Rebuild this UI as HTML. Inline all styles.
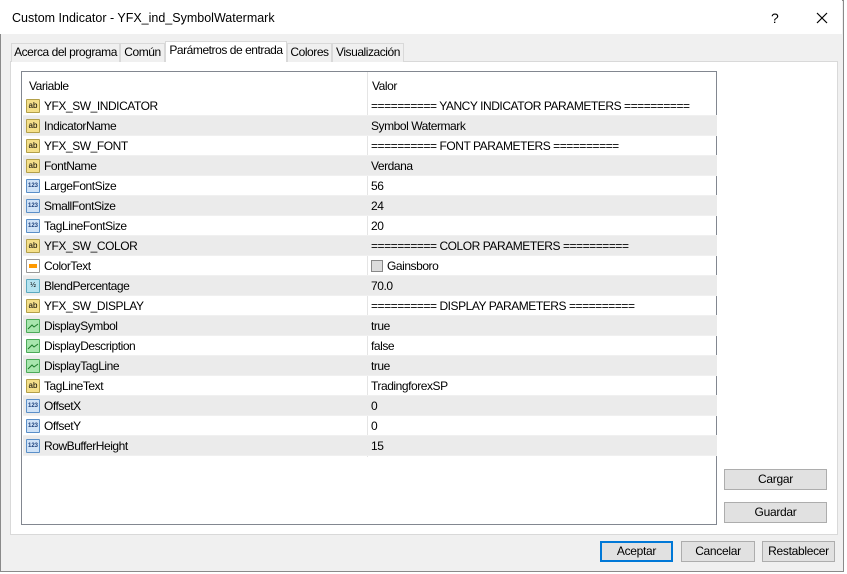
<!DOCTYPE html><html><head><style>
*{margin:0;padding:0;box-sizing:border-box}
body{width:847px;height:574px;background:#fff;font-family:"Liberation Sans",sans-serif;font-size:12px;color:#000;position:relative;overflow:hidden}
.a{position:absolute;white-space:nowrap}
.win{left:0;top:0;width:844px;height:572px;border:1px solid #8a8a8a;background:#f0f0f0}
.title{left:0;top:0;width:842px;height:34px;background:#fff}
.tab{top:43px;height:19px;border:1px solid #d9d9d9;border-bottom:none;background:#f0f0f0;text-align:center;line-height:17px;letter-spacing:-0.45px;overflow:hidden}
.page{left:10px;top:61px;width:828px;height:474px;background:#fff;border:1px solid #d9d9d9}
.list{left:21px;top:71px;width:696px;height:454px;border:1px solid #828790;background:#fff;letter-spacing:-0.45px}
.row{left:1px;width:694px;height:20px;border-bottom:1px solid #f0f0f0}
.row span{position:absolute;top:3px}
.g{background:#ebebeb}
.ic{position:absolute;left:3px;top:3px;width:14px;height:14px;border:1px solid #b3a04a;background:#f5e08a;font-size:8px;line-height:12px;text-align:center;border-radius:1px;letter-spacing:0}
.n{border-color:#5a8fc8;background:#cfe2f7;color:#1a3e7a;font-size:6px;font-weight:bold}
.h{border-color:#5aa9c0;background:#b5e3f0;font-size:7px}
.b{border-color:#4caa5a;background:#a8e6ae}
.c{border-color:#999;background:#fff}
.btn{height:21px;border:1px solid #adadad;background:#e1e1e1;text-align:center;line-height:19px;letter-spacing:-0.3px}
</style></head><body>
<div class="a win"></div>
<div class="a title"></div>
<div class="a" style="left:12px;top:11px;font-size:12.5px">Custom Indicator - YFX_ind_SymbolWatermark</div>
<div class="a" style="left:771px;top:10px;font-size:14px">?</div>
<svg class="a" style="left:816px;top:12px" width="12" height="12"><path d="M1 1L11 11M11 1L1 11" stroke="#000" stroke-width="1.2"/></svg>
<div class="a page"></div>
<div class="a tab" style="left:11px;width:109px">Acerca del programa</div>
<div class="a tab" style="left:120px;width:45px">Común</div>
<div class="a tab" style="left:287px;width:45px">Colores</div>
<div class="a tab" style="left:332px;width:72px">Visualización</div>
<div class="a tab" style="left:165px;top:41px;height:21px;width:122px;background:#fff;line-height:16px;z-index:2">Parámetros de entrada</div>
<div class="a list">
<div class="a" style="left:7px;top:7px">Variable</div>
<div class="a" style="left:350px;top:7px">Valor</div>
<div class="a" style="left:345px;top:0;width:1px;height:385px;background:#e5e5e5"></div>
<div id="rows"></div>
</div>
<div class="a btn" style="left:724px;top:469px;width:103px">Cargar</div>
<div class="a btn" style="left:724px;top:502px;width:103px">Guardar</div>
<div class="a btn" style="left:600px;top:541px;width:73px;border:2px solid #0078d7;line-height:17px">Aceptar</div>
<div class="a btn" style="left:681px;top:541px;width:74px">Cancelar</div>
<div class="a btn" style="left:762px;top:541px;width:73px">Restablecer</div>
<script>
var d=[["s","YFX_SW_INDICATOR","========== YANCY INDICATOR PARAMETERS =========="],["s","IndicatorName","Symbol Watermark"],["s","YFX_SW_FONT","========== FONT PARAMETERS =========="],["s","FontName","Verdana"],["n","LargeFontSize","56"],["n","SmallFontSize","24"],["n","TagLineFontSize","20"],["s","YFX_SW_COLOR","========== COLOR PARAMETERS =========="],["c","ColorText","Gainsboro"],["h","BlendPercentage","70.0"],["s","YFX_SW_DISPLAY","========== DISPLAY PARAMETERS =========="],["b","DisplaySymbol","true"],["b","DisplayDescription","false"],["b","DisplayTagLine","true"],["s","TagLineText","TradingforexSP"],["n","OffsetX","0"],["n","OffsetY","0"],["n","RowBufferHeight","15"]];
var h="";d.forEach(function(r,i){var ic=r[0]=="s"?'<div class="ic">ab</div>':r[0]=="n"?'<div class="ic n">123</div>':r[0]=="h"?'<div class="ic h">½</div>':r[0]=="b"?'<div class="ic b"><svg width="12" height="12" style="position:absolute;left:0;top:0"><path d="M1 9L5 5L7 7L11 4" stroke="#1d7a2a" fill="none"/></svg></div>':'<div class="ic c"><div style="position:absolute;left:2px;top:4px;width:8px;height:4px;background:#f90"></div></div>';
var v=r[0]=="c"?'<span style="left:348px;top:4px;width:12px;height:12px;border:1px solid #888;background:#dcdcdc"></span><span style="left:364px">'+r[2]+'</span>':'<span style="left:348px">'+r[2]+'</span>';
h+='<div class="a row'+(i%2?' g':'')+'" style="top:'+(24+i*20)+'px">'+ic+'<span style="left:21px">'+r[1]+'</span>'+v+'</div>';});
document.getElementById("rows").innerHTML=h;
</script>
</body></html>
